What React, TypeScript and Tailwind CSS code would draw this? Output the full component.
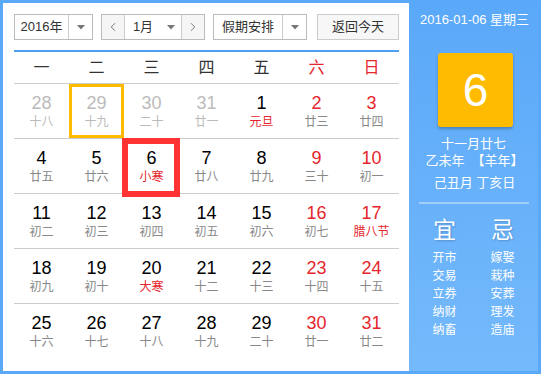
import { ChevronLeft, ChevronRight } from "lucide-react";

type Day = {
  n: number;
  l: string;
  prev?: boolean;
  redNum?: boolean;
  redLunar?: boolean;
  hover?: boolean;
  today?: boolean;
};

const weekdays = ["一", "二", "三", "四", "五", "六", "日"];

const rows: Day[][] = [
  [
    { n: 28, l: "十八", prev: true },
    { n: 29, l: "十九", prev: true, hover: true },
    { n: 30, l: "二十", prev: true },
    { n: 31, l: "廿一", prev: true },
    { n: 1, l: "元旦", redLunar: true },
    { n: 2, l: "廿三", redNum: true },
    { n: 3, l: "廿四", redNum: true },
  ],
  [
    { n: 4, l: "廿五" },
    { n: 5, l: "廿六" },
    { n: 6, l: "小寒", redLunar: true, today: true },
    { n: 7, l: "廿八" },
    { n: 8, l: "廿九" },
    { n: 9, l: "三十", redNum: true },
    { n: 10, l: "初一", redNum: true },
  ],
  [
    { n: 11, l: "初二" },
    { n: 12, l: "初三" },
    { n: 13, l: "初四" },
    { n: 14, l: "初五" },
    { n: 15, l: "初六" },
    { n: 16, l: "初七", redNum: true },
    { n: 17, l: "腊八节", redNum: true, redLunar: true },
  ],
  [
    { n: 18, l: "初九" },
    { n: 19, l: "初十" },
    { n: 20, l: "大寒", redLunar: true },
    { n: 21, l: "十二" },
    { n: 22, l: "十三" },
    { n: 23, l: "十四", redNum: true },
    { n: 24, l: "十五", redNum: true },
  ],
  [
    { n: 25, l: "十六" },
    { n: 26, l: "十七" },
    { n: 27, l: "十八" },
    { n: 28, l: "十九" },
    { n: 29, l: "二十" },
    { n: 30, l: "廿一", redNum: true },
    { n: 31, l: "廿二", redNum: true },
  ],
];

const yi = ["开市", "交易", "立券", "纳财", "纳畜"];
const ji = ["嫁娶", "栽种", "安葬", "理发", "造庙"];

const Arrow = () => (
  <div className="w-[24px] h-full flex items-center justify-center border-l border-[#ccc]">
    <svg width="8" height="5" viewBox="0 0 8 5">
      <path d="M0 0h8L4 4.5z" fill="#777" />
    </svg>
  </div>
);

function Cell({ d }: { d: Day }) {
  const numColor = d.prev ? "text-[#bbb]" : d.redNum ? "text-[#e5262d]" : "text-black";
  const lunarColor = d.prev ? "text-[#bbb]" : d.redLunar ? "text-[#e5262d]" : "text-[#888]";
  return (
    <div className="relative h-[54px] flex flex-col items-center pt-[9px]">
      {d.hover && <div className="absolute inset-0 border-[3px] border-[#ffbb00]" />}
      {d.today && (
        <div className="absolute -left-[2px] -top-px w-[58px] h-[59px] border-[6px] border-[#f33] z-10" />
      )}
      <div className={`text-[18px] leading-[20px] ${numColor}`}>{d.n}</div>
      <div className={`text-[12px] leading-[16px] mt-px ${lunarColor}`}>{d.l}</div>
    </div>
  );
}

export default function App() {
  return (
    <div
      className="w-[541px] h-[374px] border-[3px] border-[#5aa8f8] flex bg-white"
      style={{ fontFamily: '"Liberation Sans", "Noto Sans CJK SC", sans-serif' }}
    >
      <div className="w-[406px] pl-[11px] pt-[11px]">
        <div className="flex h-[26px] text-[13px] text-[#333]">
          <div className="w-[79px] h-full flex border border-[#bbb]">
            <div className="flex-1 flex items-center justify-center">2016年</div>
            <Arrow />
          </div>
          <div className="ml-[8px] w-[104px] h-full flex border border-[#bbb]">
            <div className="w-[22px] flex items-center justify-center bg-[#f5f5f5] text-[#666]">
              <ChevronLeft size={14} strokeWidth={1.5} />
            </div>
            <div className="flex-1 flex border-l border-r border-[#ccc]">
              <div className="flex-1 flex items-center justify-center">1月</div>
              <div className="w-[20px] flex items-center justify-center">
                <svg width="8" height="5" viewBox="0 0 8 5">
                  <path d="M0 0h8L4 4.5z" fill="#777" />
                </svg>
              </div>
            </div>
            <div className="w-[22px] flex items-center justify-center bg-[#f5f5f5] text-[#666]">
              <ChevronRight size={14} strokeWidth={1.5} />
            </div>
          </div>
          <div className="ml-[8px] w-[94px] h-full flex border border-[#bbb]">
            <div className="flex-1 flex items-center justify-center">假期安排</div>
            <Arrow />
          </div>
          <div className="ml-[10px] w-[82px] h-full flex items-center justify-center border border-[#ccc] bg-[#f7f7f7]">
            返回今天
          </div>
        </div>
        <div className="w-[385px] mt-[10px] border-t-2 border-[#4da0f0]">
          <div className="grid grid-cols-7 h-[32px] border-b border-[#ccc] text-[16px]">
            {weekdays.map((w, i) => (
              <div
                key={w}
                className={`flex items-center justify-center ${i >= 5 ? "text-[#e5262d]" : "text-[#333]"}`}
              >
                {w}
              </div>
            ))}
          </div>
          {rows.map((r, ri) => (
            <div
              key={ri}
              className={`grid grid-cols-7 ${ri < rows.length - 1 ? "border-b border-[#ccc]" : ""}`}
            >
              {r.map((d, di) => (
                <Cell key={di} d={d} />
              ))}
            </div>
          ))}
        </div>
      </div>
      <div className="w-[129px] -mt-[3px] pt-[3px] bg-gradient-to-b from-[#5aa8f9] to-[#74b9fb] text-white flex flex-col items-center">
        <div className="mt-[9px] text-[13px] leading-[16px] pl-[2px]">2016-01-06 星期三</div>
        <div className="mt-[25px] ml-[4px] w-[75px] h-[74px] rounded-[3px] bg-[#ffbb00] shadow-[0_2px_3px_rgba(0,0,0,0.25)] flex items-center justify-center text-[46px] leading-none">
          6
        </div>
        <div className="mt-[8px] text-[13px] leading-[17px]">十一月廿七</div>
        <div className="mt-0 ml-[2px] text-[13px] leading-[17px] whitespace-pre">乙未年  【羊年】</div>
        <div className="mt-[5px] ml-[2px] text-[13px] leading-[17px]">己丑月 丁亥日</div>
        <div className="mt-[11px] w-[110px] h-[2px] bg-[#a3cdfb]" />
        <div className="mt-[13px] flex w-[110px] justify-between px-[14px]">
          <div className="flex flex-col items-center">
            <div className="text-[23px] leading-[26px] [text-shadow:1px_1px_2px_rgba(0,0,0,0.2)]">宜</div>
            <div className="mt-[6px] flex flex-col items-center text-[12px] leading-[18px]">
              {yi.map((t) => (
                <div key={t}>{t}</div>
              ))}
            </div>
          </div>
          <div className="flex flex-col items-center">
            <div className="text-[23px] leading-[26px] [text-shadow:1px_1px_2px_rgba(0,0,0,0.2)]">忌</div>
            <div className="mt-[6px] flex flex-col items-center text-[12px] leading-[18px]">
              {ji.map((t) => (
                <div key={t}>{t}</div>
              ))}
            </div>
          </div>
        </div>
      </div>
    </div>
  );
}
